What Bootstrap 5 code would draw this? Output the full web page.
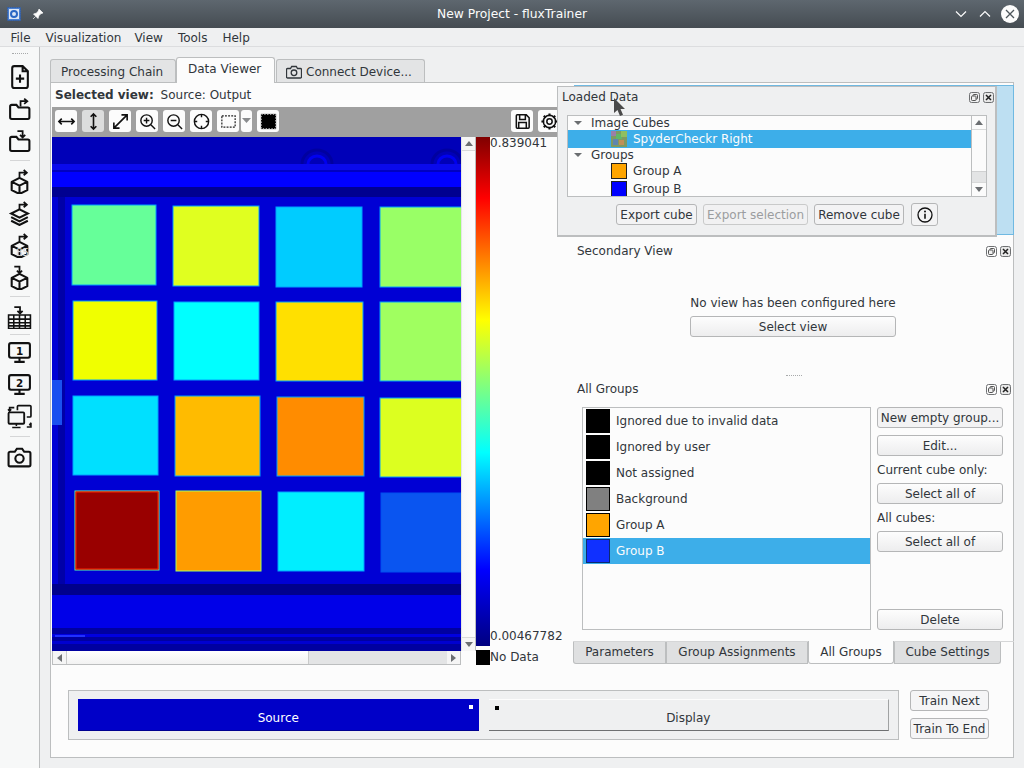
<!DOCTYPE html>
<html lang="en">
<head>
<meta charset="utf-8">
<title>New Project - fluxTrainer</title>
<link href="https://cdn.jsdelivr.net/npm/bootstrap@5.3.0/dist/css/bootstrap.min.css" rel="stylesheet">
<style>
html,body{height:768px;overflow:hidden}
body{font-family:"DejaVu Sans",sans-serif;font-size:12px;color:#31363b;background:#eff0f1;line-height:1.2}
.app{width:1024px;height:768px}
.sprite{position:absolute;width:0;height:0}
.titlebar{height:28px;background:linear-gradient(#5e676f,#454c52);color:#fcfcfc;font-size:12.3px;padding-left:7px}
.titlebar .ttl{left:0;right:0;top:7px;text-align:center}
.pin{margin-left:11px}
.wctl{gap:12px;margin-right:5px}
.wcl{margin-left:-2px}
.menubar{height:19px;padding-left:3px;border-bottom:1px solid #dcdddf}
.menubar span{padding:1px 7px 0 7.5px;line-height:18px}
.menubar span:nth-child(2){padding:1px 5px 0 8px}
.menubar span:nth-child(n+3){padding:1px 7px 0 8px}
.sidebar{width:40px;flex:none;border-right:1px solid #bcbebf;background:#f7f8f8}
.grip{height:13px;display:flex;align-items:center;justify-content:center}
.grip i{width:16px;border-top:1px dotted #a8aaab;display:block}
.tb{height:32px;display:flex;align-items:center;justify-content:center}
.tb svg{width:25px;height:25px}
.sep{display:flex;align-items:center;justify-content:center}
.sep i{display:block;width:20px;border-top:1px solid #d5d6d7}
.s9{height:9px}.s7{height:7px}.s4{height:4px}.s8{height:8px}
.main{padding:10px 10px 10px 10px;width:984px}
.nav-tabs.qt{border:0;height:25px;align-items:flex-end;margin:0;flex-wrap:nowrap}
.nav-tabs.qt .nav-link{height:23px;padding:1px 0 0 10px;color:#31363b;background:#e3e4e5;border:1px solid #bcbebf;border-bottom:0;border-radius:3px 3px 0 0;margin:0;line-height:18px;display:flex;align-items:center;gap:4px;white-space:nowrap}
.nav-tabs.qt .nav-link.active{height:26px;background:#fcfcfc;padding:0 0 3px 11px;position:relative;z-index:2;margin-bottom:-1px}
.w-t1{width:126px}.w-t2{width:99px}
.nav-tabs.qt .w-t3{width:149px;margin-left:1px;padding-left:9px}
.panel{height:676px;width:964px;background:#fcfcfc;border:1px solid #bcbebf;position:relative}
.upper{height:607px}
.leftc{width:506px;flex:none;padding-left:1px}
.selview{height:24px;padding-left:3px;line-height:25px;white-space:nowrap}
.selview b{margin-right:3px;font-weight:700}
.imgtb{height:30px;width:505px;background:#a0a0a0;padding:3px;gap:5px;display:flex;align-items:flex-start;overflow:hidden;flex:none}
.tbtn{width:22px;height:22px;flex:none;background:#fcfcfc;border-radius:3px;display:flex;align-items:center;justify-content:center}
.tbtn.on{background:#dcdddd}
.tbtn.narrow{width:11px;margin-left:-3px}
.tbtn svg{width:19px;height:19px}
.tbtn.narrow svg{width:9px;height:6px}
.spacer{width:222px;flex:none}
.imgcol{width:424px;flex:none}
.canvas{width:409px;height:514px;display:block;flex:none}
.vsb{width:15px;height:514px;background:linear-gradient(90deg,#f8f8f8,#fdfdfd);border-left:1px solid #e4e5e5;border-right:1px solid #bcbebf;flex:none}
.arrow-btn{height:14px;display:flex;align-items:center;justify-content:center;background:#f5f5f5}
.vsb .arrow-btn:first-child{border-bottom:1px solid #d8d9d9}
.vsb .arrow-btn:last-child{border-top:1px solid #d8d9d9}
.hsb{height:14px;width:409px;background:#e3e4e5;border:1px solid #bcbebf;border-top:0}
.hsb .thumb{width:243px;background:linear-gradient(#fff,#f2f2f2);border-left:1px solid #c9caca;border-right:1px solid #c9caca}
.hsb .arrow-btn{width:13px;height:13px}
.bar{width:14px;height:509px;background:linear-gradient(#800000 0,#ff0000 12%,#ffff00 36%,#00ffff 62%,#0000ff 85%,#000080 100%)}
.nodata{width:14px;height:15px;background:#000;margin-top:4px}
.lbls{height:529px;margin-top:-1px;white-space:nowrap;position:relative;z-index:1}
.lbls span{line-height:15px}
.lbls .l2{margin-top:6px}
.rightc{width:457px;flex:none}
.dropzone{height:150px;margin:2px 0 0 17px;width:440px;background:#bddff2;border:1px solid #6fb9e2}
.docktitle{height:16px;padding:0 3px 0 20px;display:flex;align-items:center;justify-content:space-between}
.dt1{margin-top:8px}.dt2{margin-top:3px}
.dk{display:flex;gap:3px}
.dk svg{width:11px;height:11px;display:block}
.second{height:116px;padding-top:37px}
.qbtn{font-size:12px;line-height:1;padding:0;color:#31363b;height:21px;background:linear-gradient(#fdfdfd,#ededee);border:1px solid #b5b6b7;border-radius:3px;display:flex;align-items:center;justify-content:center}
.qbtn.flat{background:#f3f3f4}
.qbtn.btn:disabled{opacity:1;color:#9b9d9f;background:#f1f1f2;border-color:#c9caca}
.selbtn{width:206px;margin:6px 0 0 133px}
.sectxt{width:206px;margin-left:133px;text-align:center;white-space:nowrap}
.dots{height:3px;display:flex;justify-content:center}
.dots i{width:16px;display:block;border-top:1px dotted #a8aaab;margin-left:17px}
.groups{height:223px;margin:10px 11px 0 25px;gap:6px}
.glist{width:289px;border:1px solid #bcbebf;background:#fcfcfc;border-radius:0;display:block;flex:none}
.gitem{height:26px;display:flex;align-items:center;gap:6px;padding:0 0 0 3px;background:transparent;border:0;color:#31363b;border-radius:0}
.gitem.sel{background:#3daee9;color:#fcfcfc}
.sw{width:24px;height:24px;border:1px solid #000;flex:none;background:#000}
.sw.gr{background:#808080}.sw.or{background:#ffa500}.sw.bl{background:#1030ff;border-color:#0a2a70}
.side{width:126px;flex:none}
.side .qbtn{width:126px}
.side .mt7{margin-top:7px}
.lab{height:27px;display:flex;align-items:center;padding-top:1px}
.btabs{height:24px;margin:11px 0 0 16px;border-top:1px solid #d5d6d7}
.btabs .t{height:22px;background:#dfe0e1;border:1px solid #bcbebf;border-top:0;display:flex;align-items:center;justify-content:center}
.btabs .t.first{border-radius:0 0 0 3px;width:93px}
.btabs .t.ga{width:142px}
.btabs .t.on{height:23px;width:86px;background:#fcfcfc;border-radius:0 0 3px 3px;margin-top:-1px;padding-top:1px}
.btabs .t.last{border-radius:0 0 3px 0;width:107px}
.runrow{padding-left:17px;gap:11px}
.gbox{width:831px;height:50px;background:#eff0f1;border:1px solid #bcbebf;padding:8px 9px;gap:10px}
.src{width:401px;height:32px;background:#0000c8;color:#fff;position:relative;border-bottom:1px solid #000090;padding-top:12px;text-align:center}
.disp{width:401px;height:32px;background:#eff0f1;border-top:1px solid #fcfcfc;border-bottom:1px solid #6e7072;border-right:1px solid #a0a2a3;position:relative;padding-top:11px;text-align:center}
.mk{position:absolute;width:4px;height:4px;top:6px}
.mk.w{right:6px;background:#fff}.mk.k{left:6px;background:#000}
.trains{width:80px;gap:7px}
.trains .qbtn{height:21px;width:79px;background:#f5f5f6;padding-top:1px}
.float{position:absolute;left:506px;top:3px;width:440px;height:151px;background:#eff0f1;border:2px solid #bcbebf;border-top-width:1px;border-left-width:1px;z-index:5}
.ftitle{height:20px;padding:0 1px 0 4px;display:flex;align-items:center;justify-content:space-between}
.tree{position:relative;height:82px;margin:8px 8px 0 9px;width:420px;background:#fcfcfc;border:1px solid #bcbebf;overflow:hidden;flex:none}
.trow{height:14px;display:flex;align-items:center;white-space:nowrap}
.trow.sel{height:18px;background:#3daee9;color:#fcfcfc;width:404px}
.trow.it{height:18px}
.tri{width:0;height:0;border:4px solid transparent;border-top:4px solid #6b6e71;border-bottom:0;margin:0 9px 0 6px;flex:none}
.tw{width:16px;height:16px;border:1px solid #222;flex:none;margin:0 6px 0 43px}
.tw.th{border:0}
.tw.or{background:#ffa500}.tw.bl{background:#0000ff}
.tvsb{position:absolute;right:0;top:0;bottom:0;width:15px;background:#fbfbfb;border-left:1px solid #bcbebf}
.tvsb .up{height:14px;display:flex;align-items:center;justify-content:center;border-bottom:1px solid #d8d9d9}
.tvsb .trk{height:41px}
.tvsb .th2{height:11px;background:#e3e4e5;border-top:1px solid #cfd0d1}
.tvsb .up.b{border-top:1px solid #d8d9d9;border-bottom:0}
.fbtns{gap:6px;padding-left:58px;margin-top:6px;align-items:center}
.b81{width:81px}.b105{width:105px}.b90{width:90px}
.qbtn.binfo{width:27px;height:23px;margin-left:1px}
.cursor{position:absolute;left:562px;top:15px;z-index:9;width:13px;height:19px}
</style>
</head>
<body>
<svg class="sprite">
<defs>
<symbol id="cube" viewBox="0 0 24 24"><path d="M12 8.500l7.500 3.800v8L12 24l-7.500-3.700v-8zM4.800 12.400L12 16l7.200-3.600M12 16v8" fill="none" stroke="#111" stroke-width="2" stroke-linejoin="round"/></symbol>
<symbol id="arrUR" viewBox="0 0 24 24"><path d="M12 8V3.500h6M16 1l3 2.500L16 6" fill="none" stroke="#111" stroke-width="1.700"/></symbol>
<symbol id="arrD" viewBox="0 0 24 24"><path d="M7 1.500h5v6M9.500 5.500L12 8l2.500-2.500" fill="none" stroke="#111" stroke-width="1.700"/></symbol>
<symbol id="mon" viewBox="0 0 24 24"><rect x="2" y="3" width="20" height="14" rx="1.800" fill="none" stroke="#111" stroke-width="2"/><path d="M12 17v3M7 21h10" stroke="#111" stroke-width="2"/></symbol>
<symbol id="dkf" viewBox="0 0 11 11"><rect x=".5" y=".5" width="10" height="10" rx="2" fill="none" stroke="#6e7072"/><rect x="4" y="2.500" width="4.500" height="4.500" rx=".8" fill="none" stroke="#555"/><rect x="2.500" y="4" width="4.500" height="4.500" rx=".8" fill="#f0f0f0" stroke="#555"/></symbol>
<symbol id="dkx" viewBox="0 0 11 11"><rect x=".5" y=".5" width="10" height="10" rx="2" fill="#e8e8e8" stroke="#6e7072"/><path d="M3 3l5 5M8 3l-5 5" stroke="#222" stroke-width="1.500"/></symbol>
</defs>
</svg>
<div class="app d-flex flex-column">
  <div class="titlebar position-relative d-flex align-items-center flex-none">
    <svg width="14" height="14" viewBox="0 0 14 14"><rect x=".5" y=".5" width="13" height="13" fill="#4a7fd0" stroke="#2f5ea8" stroke-dasharray="1.500 .8"/><rect x="2" y="2" width="10" height="10" fill="#dce6f5"/><circle cx="7" cy="7" r="3" fill="none" stroke="#2b67c4" stroke-width="2"/></svg>
    <svg class="pin" width="12" height="12" viewBox="0 0 12 12"><path d="M7 1l4 4-2 .6-2.200 2.200L6 10.500 1.500 6l2.700-.8L6.400 3z M3.500 8.500L1 11" fill="#fcfcfc" stroke="#fcfcfc" stroke-width=".7"/></svg>
    <div class="ttl position-absolute">New Project - fluxTrainer</div>
    <div class="ms-auto d-flex align-items-center position-relative wctl">
      <svg width="12" height="8" viewBox="0 0 12 8"><path d="M1 1.500l5 5 5-5" fill="none" stroke="#fcfcfc" stroke-width="1.200"/></svg>
      <svg width="12" height="8" viewBox="0 0 12 8"><path d="M1 6.500l5-5 5 5" fill="none" stroke="#fcfcfc" stroke-width="1.200"/></svg>
      <svg class="wcl" width="18" height="18" viewBox="0 0 18 18"><circle cx="9" cy="9" r="9" fill="#fcfcfc"/><path d="M5 5l8 8M13 5l-8 8" stroke="#4d555b" stroke-width="1.300"/></svg>
    </div>
  </div>
  <div class="menubar d-flex flex-none"><span>File</span><span>Visualization</span><span>View</span><span>Tools</span><span>Help</span></div>
  <div class="d-flex flex-grow-1">
    <div class="sidebar d-flex flex-column">
      <div class="grip"><i></i></div>
      <div class="tb"><svg viewBox="0 0 24 24"><path d="M5 4a2 2 0 0 1 2-2h8l5 5v14a2 2 0 0 1-2 2H7a2 2 0 0 1-2-2zM15 2v5h5M12.500 10v8M8.500 14h8" fill="none" stroke="#111" stroke-width="2"/></svg></div>
      <div class="tb"><svg viewBox="0 0 24 24"><path d="M3 10a1.500 1.500 0 0 1 1.500-1.500H9l2 2.500h9a1.500 1.500 0 0 1 1.500 1.500v8a1.500 1.500 0 0 1-1.500 1.500H4.500A1.500 1.500 0 0 1 3 20.500z" fill="none" stroke="#111" stroke-width="2"/><path d="M13 10V5h6M16.500 2.500l3 2.500-3 2.500" fill="none" stroke="#111" stroke-width="1.700"/></svg></div>
      <div class="tb"><svg viewBox="0 0 24 24"><path d="M3 10a1.500 1.500 0 0 1 1.500-1.500H9l2 2.500h9a1.500 1.500 0 0 1 1.500 1.500v8a1.500 1.500 0 0 1-1.500 1.500H4.500A1.500 1.500 0 0 1 3 20.500z" fill="none" stroke="#111" stroke-width="2"/><path d="M10 3h5v6M12.500 6.500L15 9l2.500-2.500" fill="none" stroke="#111" stroke-width="1.700"/></svg></div>
      <div class="sep s9"><i></i></div>
      <div class="tb"><svg viewBox="0 0 24 24"><use href="#cube"/><use href="#arrUR"/></svg></div>
      <div class="tb"><svg viewBox="0 0 24 24"><path d="M12 8l8 4-8 4-8-4zM4 15.500l8 4 8-4M4 19l8 4 8-4" fill="none" stroke="#111" stroke-width="2"/><use href="#arrUR"/></svg></div>
      <div class="tb"><svg viewBox="0 0 24 24"><use href="#cube"/><use href="#arrUR"/><text x="15" y="22" font-size="10" fill="#d4d4d4" text-anchor="middle" font-family="DejaVu Sans">85</text></svg></div>
      <div class="tb"><svg viewBox="0 0 24 24"><use href="#cube"/><use href="#arrD"/></svg></div>
      <div class="sep s7"><i></i></div>
      <div class="tb"><svg viewBox="0 0 24 24"><path d="M1.500 10.500h21v13h-21zM1.500 14.500h21M1.500 18h21M1.500 21h21M6.500 10.500v13M12 10.500v13M17.500 10.500v13" fill="none" stroke="#111" stroke-width="1.500"/><path d="M7 3h5.500v6M10 6.500L12.500 9 15 6.500" fill="none" stroke="#111" stroke-width="1.700"/></svg></div>
      <div class="sep s4"><i></i></div>
      <div class="tb"><svg viewBox="0 0 24 24"><use href="#mon"/><text x="12" y="14" font-size="10" font-weight="700" text-anchor="middle" fill="#111" font-family="DejaVu Sans">1</text></svg></div>
      <div class="tb"><svg viewBox="0 0 24 24"><use href="#mon"/><text x="12" y="14" font-size="10" font-weight="700" text-anchor="middle" fill="#111" font-family="DejaVu Sans">2</text></svg></div>
      <div class="tb"><svg viewBox="0 0 24 24"><path d="M10 6V2.500a1 1 0 0 1 1-1h11a1 1 0 0 1 1 1v9a1 1 0 0 1-1 1h-3" fill="none" stroke="#111" stroke-width="1.600"/><rect x="1.500" y="8" width="15" height="11" rx="1" fill="none" stroke="#111" stroke-width="1.800"/><path d="M9 19v2M5 22.500h8M7 3.500H2.500v3M1 5l1.500 2L4 5M23 18v4h-4M21.500 20.500L23 18" fill="none" stroke="#111" stroke-width="1.500"/></svg></div>
      <div class="sep s8"><i></i></div>
      <div class="tb"><svg viewBox="0 0 24 24"><path d="M3 7.500h4.500L9.500 4.500h5l2 3H21a1.500 1.500 0 0 1 1.500 1.500v11a1.500 1.500 0 0 1-1.500 1.500H3A1.500 1.500 0 0 1 1.500 20V9A1.500 1.500 0 0 1 3 7.500z" fill="none" stroke="#111" stroke-width="2"/><circle cx="12" cy="14" r="4" fill="none" stroke="#111" stroke-width="2"/></svg></div>
    </div>
    <div class="main">
      <ul class="nav nav-tabs qt">
        <li class="nav-item"><a class="nav-link w-t1" href="#">Processing Chain</a></li>
        <li class="nav-item"><a class="nav-link active w-t2" href="#">Data Viewer</a></li>
        <li class="nav-item"><a class="nav-link w-t3" href="#">
          <svg width="16" height="14" viewBox="0 0 16 14"><path d="M1.500 3.500h3l1.200-2h4.600l1.200 2h3a1 1 0 0 1 1 1v7.500a1 1 0 0 1-1 1h-13a1 1 0 0 1-1-1V4.500a1 1 0 0 1 1-1z" fill="none" stroke="#31363b" stroke-width="1.300"/><circle cx="8" cy="7.800" r="2.800" fill="none" stroke="#31363b" stroke-width="1.300"/></svg>Connect Device...</a></li>
      </ul>
      <div class="panel">
        <div class="float d-flex flex-column">
          <div class="ftitle"><span>Loaded Data</span><span class="dk"><svg><use href="#dkf"/></svg><svg><use href="#dkx"/></svg></span></div>
          <div class="tree">
            <div class="trow"><span class="tri"></span>Image Cubes</div>
            <div class="trow sel"><svg class="tw th" viewBox="0 0 16 16"><rect width="16" height="16" fill="#7f9a62"/><rect x="0" y="0" width="5" height="5" fill="#9b7fa8"/><rect x="5" y="3" width="6" height="5" fill="#5fb86a"/><rect x="10" y="0" width="6" height="6" fill="#8fbf60"/><rect x="2" y="8" width="5" height="6" fill="#5e86b0"/><rect x="8" y="9" width="5" height="5" fill="#c09058"/></svg>SpyderCheckr Right</div>
            <div class="trow"><span class="tri"></span>Groups</div>
            <div class="trow it"><span class="tw or"></span>Group A</div>
            <div class="trow it"><span class="tw bl"></span>Group B</div>
            <div class="tvsb"><div class="up"><svg width="8" height="5"><path d="M0 5L4 0l4 5z" fill="#6b6e71"/></svg></div><div class="trk"></div><div class="th2"></div><div class="up b"><svg width="8" height="5"><path d="M0 0l4 5 4-5z" fill="#6b6e71"/></svg></div></div>
          </div>
          <div class="d-flex fbtns">
            <button class="btn qbtn flat b81">Export cube</button>
            <button class="btn qbtn b105" disabled>Export selection</button>
            <button class="btn qbtn flat b90">Remove cube</button>
            <button class="btn qbtn flat binfo"><svg width="16" height="16" viewBox="0 0 16 16"><circle cx="8" cy="8" r="7" fill="none" stroke="#111" stroke-width="1.300"/><path d="M8 6.800v5" stroke="#111" stroke-width="1.600"/><circle cx="8" cy="4.500" r="1" fill="#111"/></svg></button>
          </div>
        </div>
        <svg class="cursor" viewBox="0 0 13 19"><path d="M1 0v15l3.500-3 2.500 6 3-1.300-2.500-5.700H12z" fill="#4a4a4a"/></svg>
        <div class="upper d-flex">
          <div class="leftc d-flex flex-column">
            <div class="selview"><b>Selected view:</b> Source: Output</div>
            <div class="imgtb">
              <span class="tbtn"><svg viewBox="0 0 20 20"><path d="M2 10h16M5 7l-3 3 3 3M15 7l3 3-3 3" fill="none" stroke="#111" stroke-width="1.700"/></svg></span>
              <span class="tbtn on"><svg viewBox="0 0 20 20"><path d="M10 2v16M7 5l3-3 3 3M7 15l3 3 3-3" fill="none" stroke="#111" stroke-width="1.700"/></svg></span>
              <span class="tbtn"><svg viewBox="0 0 20 20"><path d="M3 17L17 3M11 3h6v6M3 11v6h6" fill="none" stroke="#111" stroke-width="1.700"/></svg></span>
              <span class="tbtn"><svg viewBox="0 0 20 20"><circle cx="9" cy="9" r="6" fill="none" stroke="#111" stroke-width="1.500"/><path d="M13.500 13.500L18 18M9 6v6M6 9h6" fill="none" stroke="#111" stroke-width="1.500"/></svg></span>
              <span class="tbtn"><svg viewBox="0 0 20 20"><circle cx="9" cy="9" r="6" fill="none" stroke="#111" stroke-width="1.500"/><path d="M13.500 13.500L18 18M6 9h6" fill="none" stroke="#111" stroke-width="1.500"/></svg></span>
              <span class="tbtn"><svg viewBox="0 0 20 20"><circle cx="10" cy="10" r="7.500" fill="none" stroke="#111" stroke-width="1.500"/><path d="M10 2.500v3M10 14.500v3M2.500 10h3M14.500 10h3" stroke="#111" stroke-width="1.500"/></svg></span>
              <span class="tbtn"><svg viewBox="0 0 20 20"><rect x="3" y="4" width="14" height="12" fill="none" stroke="#222" stroke-width="1.300" stroke-dasharray="2 1.300"/></svg></span>
              <span class="tbtn narrow"><svg viewBox="0 0 9 6"><path d="M0 0h9L4.500 5z" fill="#8a8c8e"/></svg></span>
              <span class="tbtn"><svg viewBox="0 0 20 20"><rect x="2" y="2" width="16" height="16" fill="#000"/><rect x="2.500" y="2.500" width="15" height="15" fill="none" stroke="#bbb" stroke-dasharray="1.500 1.500"/></svg></span>
              <span class="spacer"></span>
              <span class="tbtn"><svg viewBox="0 0 20 20"><path d="M3.500 4a1 1 0 0 1 1-1H14l3 3v10a1 1 0 0 1-1 1H4.500a1 1 0 0 1-1-1zM7 3v5h6V3M6 17v-6h8v6" fill="none" stroke="#111" stroke-width="1.600"/></svg></span>
              <span class="tbtn"><svg viewBox="0 0 20 20"><circle cx="10" cy="10" r="2.800" fill="none" stroke="#111" stroke-width="1.600"/><circle cx="10" cy="10" r="6.500" fill="none" stroke="#111" stroke-width="1.600"/><path d="M10 1.500v3M10 15.500v3M1.500 10h3M15.500 10h3M4 4l2 2M14 14l2 2M16 4l-2 2M6 14l-2 2" stroke="#111" stroke-width="2.200"/></svg></span>
            </div>
            <div class="d-flex">
              <div class="imgcol">
                <div class="d-flex">
                  <svg class="canvas" viewBox="0 0 409 514" preserveAspectRatio="none">
                    <rect width="409" height="514" fill="#0000d4"/>
                    <rect width="409" height="27" fill="#0000b8"/>
                    <g fill="none"><path d="M250 27a15 14 0 0 1 30 0" stroke="#0000a0" stroke-width="3"/><path d="M256 27a9 8 0 0 1 18 0" stroke="#0000f0" stroke-width="3"/><path d="M380 27a15 14 0 0 1 30 0" stroke="#0000a0" stroke-width="3"/><path d="M386 27a9 8 0 0 1 18 0" stroke="#0000f0" stroke-width="3"/></g>
                    <rect y="27" width="409" height="6" fill="#0a0aec"/>
                    <rect y="33" width="409" height="2" fill="#0000c0"/>
                    <rect y="35" width="409" height="15" fill="#0000ff"/>
                    <rect y="50" width="409" height="10" fill="#000090"/>
                    <rect x="6" y="60" width="7" height="390" fill="#0000a8"/>
                    <rect x="0" y="243" width="10" height="45" fill="#1a50f0"/>
                    <g stroke="#00a0ff" stroke-width="1">
                      <rect x="20" y="68" width="84" height="80" fill="#66ff99"/>
                      <rect x="121" y="69" width="86" height="80" fill="#e0ff20"/>
                      <rect x="224" y="70" width="86" height="80" fill="#00ccff"/>
                      <rect x="328" y="70" width="90" height="80" fill="#99ff66"/>
                      <rect x="21" y="164" width="84" height="79" fill="#f0ff00"/>
                      <rect x="122" y="165" width="85" height="78" fill="#00ffff"/>
                      <rect x="224" y="165" width="87" height="79" fill="#ffe000"/>
                      <rect x="328" y="165" width="90" height="79" fill="#a0ff60"/>
                      <rect x="21" y="259" width="85" height="79" fill="#00e0ff"/>
                      <rect x="123" y="259" width="85" height="80" fill="#ffbb00"/>
                      <rect x="225" y="260" width="87" height="79" fill="#ff8c00"/>
                      <rect x="328" y="261" width="90" height="79" fill="#dcff20"/>
                      <rect x="23" y="354" width="84" height="79" fill="#990000" stroke="#60ffa0"/>
                      <rect x="24" y="355" width="82" height="77" fill="none" stroke="#ff2000"/>
                      <rect x="124" y="354" width="85" height="80" fill="#ff9c00" stroke="#a0ff60"/>
                      <rect x="226" y="355" width="86" height="79" fill="#00eeff"/>
                      <rect x="329" y="356" width="90" height="79" fill="#0a55f0" stroke="#0050f0"/>
                    </g>
                    <rect y="447" width="409" height="11" fill="#00008c"/>
                    <rect y="458" width="409" height="33" fill="#0000e8"/>
                    <rect y="491" width="409" height="23" fill="#0000a0"/>
                    <rect y="497" width="409" height="3" fill="#0000e0"/>
                    <rect x="3" y="498" width="30" height="2" fill="#2030ff"/>
                    <rect y="504" width="409" height="3" fill="#0000d0"/>
                  </svg>
                  <div class="vsb d-flex flex-column"><div class="arrow-btn"><svg width="8" height="5"><path d="M0 5L4 0l4 5z" fill="#6b6e71"/></svg></div><div class="flex-grow-1"></div><div class="arrow-btn"><svg width="8" height="5"><path d="M0 0l4 5 4-5z" fill="#6b6e71"/></svg></div></div>
                </div>
                <div class="hsb d-flex">
                  <div class="arrow-btn"><svg width="5" height="8"><path d="M5 0L0 4l5 4z" fill="#6b6e71"/></svg></div>
                  <div class="thumb"></div>
                  <div class="flex-grow-1"></div>
                  <div class="arrow-btn"><svg width="5" height="8"><path d="M0 0l5 4-5 4z" fill="#6b6e71"/></svg></div>
                </div>
              </div>
              <div><div class="bar"></div><div class="nodata"></div></div>
              <div class="lbls d-flex flex-column"><span>0.839041</span><span class="mt-auto">0.00467782</span><span class="l2">No Data</span></div>
            </div>
          </div>
          <div class="rightc">
            <div class="dropzone"></div>
            <div class="docktitle dt1"><span>Secondary View</span><span class="dk"><svg><use href="#dkf"/></svg><svg><use href="#dkx"/></svg></span></div>
            <div class="second"><div class="sectxt">No view has been configured here</div><button class="btn qbtn selbtn">Select view</button></div>
            <div class="dots"><i></i></div>
            <div class="docktitle dt2"><span>All Groups</span><span class="dk"><svg><use href="#dkf"/></svg><svg><use href="#dkx"/></svg></span></div>
            <div class="groups d-flex">
              <div class="list-group glist">
                <div class="list-group-item gitem"><span class="sw"></span>Ignored due to invalid data</div>
                <div class="list-group-item gitem"><span class="sw"></span>Ignored by user</div>
                <div class="list-group-item gitem"><span class="sw"></span>Not assigned</div>
                <div class="list-group-item gitem"><span class="sw gr"></span>Background</div>
                <div class="list-group-item gitem"><span class="sw or"></span>Group A</div>
                <div class="list-group-item gitem sel"><span class="sw bl"></span>Group B</div>
              </div>
              <div class="side d-flex flex-column">
                <button class="btn qbtn flat">New empty group...</button>
                <button class="btn qbtn mt7">Edit...</button>
                <div class="lab">Current cube only:</div>
                <button class="btn qbtn">Select all of</button>
                <div class="lab">All cubes:</div>
                <button class="btn qbtn">Select all of</button>
                <button class="btn qbtn mt-auto">Delete</button>
              </div>
            </div>
            <div class="btabs d-flex">
              <div class="t first">Parameters</div>
              <div class="t ga">Group Assignments</div>
              <div class="t on">All Groups</div>
              <div class="t last">Cube Settings</div>
            </div>
          </div>
        </div>
        <div class="runrow d-flex">
          <div class="gbox d-flex flex-none">
            <div class="src">Source<span class="mk w"></span></div>
            <div class="disp">Display<span class="mk k"></span></div>
          </div>
          <div class="trains d-flex flex-column">
            <button class="btn qbtn">Train Next</button>
            <button class="btn qbtn">Train To End</button>
          </div>
        </div>
      </div>
    </div>
  </div>
</div>
<script src="https://cdn.jsdelivr.net/npm/bootstrap@5.3.0/dist/js/bootstrap.bundle.min.js"></script>
</body>
</html>
